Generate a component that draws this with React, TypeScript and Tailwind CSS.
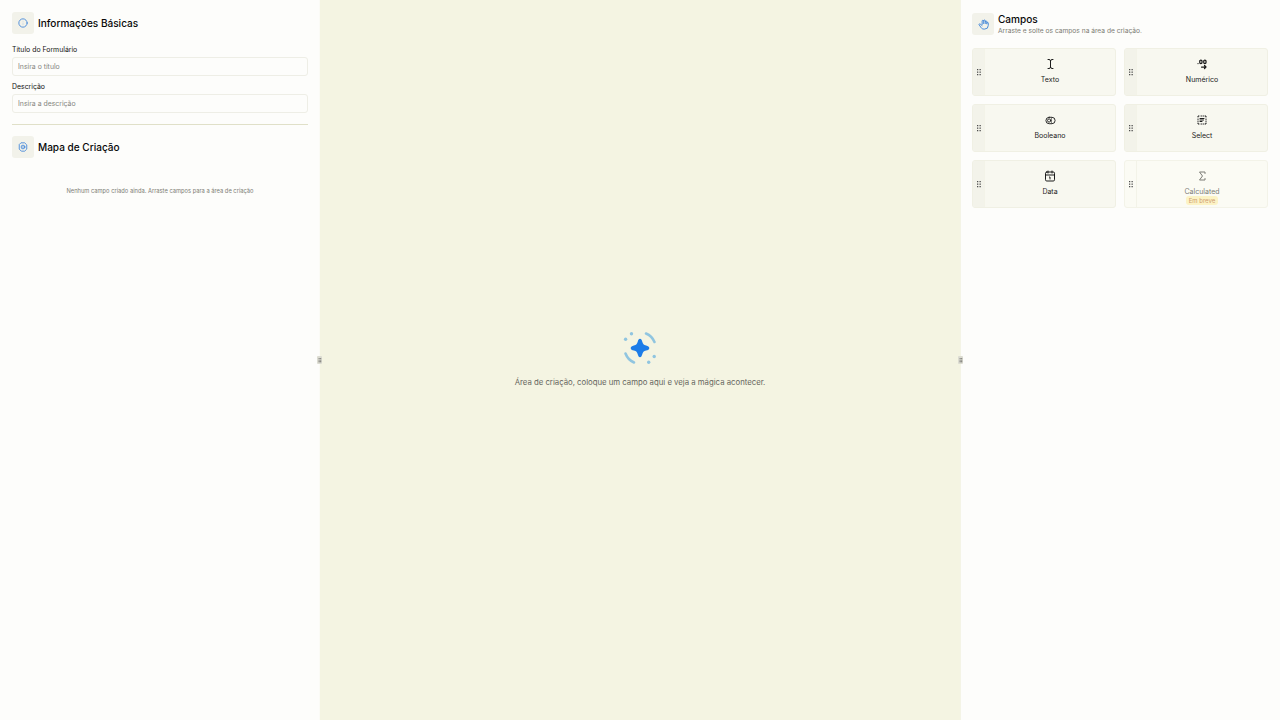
import type { ReactNode } from "react";

const stroke = {
  viewBox: "0 0 24 24",
  fill: "none",
  stroke: "currentColor",
  strokeWidth: 2,
  strokeLinecap: "round" as const,
  strokeLinejoin: "round" as const,
};

const InfoIcon = () => (
  <svg {...stroke} className="size-[10px]">
    <circle cx="12" cy="12" r="10" />
    <path d="M12 16v-4M12 8h.01" strokeWidth={1.3} opacity={0.35} />
  </svg>
);

const MapIcon = () => (
  <svg {...stroke} className="size-[10px]">
    <path d="M8 2h8l5 5v10l-5 5H8l-5-5V7z" />
    <circle cx="12" cy="12" r="4.500" />
    <path d="M11 12h2" />
  </svg>
);

const HandIcon = () => (
  <svg {...stroke} className="size-[11px]">
    <path d="M9 12V4.500a1.700 1.700 0 0 1 3.400 0V10M12.400 4a1.700 1.700 0 0 1 3.400 0v6M15.800 6a1.700 1.700 0 0 1 3.400 0v4.500M19.200 9a1.600 1.600 0 0 1 3.200 0v5a8 8 0 0 1-8 8H13c-3 0-5-1.200-6.400-3.400L2.400 12.500c-.700-1.200 1-2.700 2.300-1.600L9 14.500" />
  </svg>
);

const TextIcon = () => (
  <svg {...stroke} className="size-[12px]">
    <path d="M8 3h2q3 0 3 3v12q0 3-3 3H8M18 3h-2q-3 0-3 3M18 21h-2q-3 0-3-3" />
  </svg>
);

const DecimalIcon = () => (
  <svg {...stroke} strokeWidth={2.5} className="size-[12px]">
    <path d="M4 11h.01" />
    <rect x="7.500" y="4" width="4.500" height="7" rx="2.200" />
    <rect x="15.500" y="4" width="4.500" height="7" rx="2.200" />
    <path d="M11 18h9m-3-3 3 3-3 3" />
  </svg>
);

const ToggleIcon = () => (
  <svg {...stroke} className="size-[11px]">
    <rect x="2" y="5" width="20" height="14" rx="7" />
    <circle cx="9" cy="12" r="3.500" />
    <path d="M14 6v12" strokeWidth={1.200} />
  </svg>
);

const SelectIcon = () => (
  <svg {...stroke} className="size-[12px]">
    <path d="M4 6V4h2M18 4h2v2M20 18v2h-2M6 20H4v-2M10 4h1M14 4h1M10 20h1M14 20h1M4 10v1M4 14v1M20 10v1M20 14v1" />
    <path d="M8 9h8M8 12h7M8 15h4" />
  </svg>
);

const DateIcon = () => (
  <svg {...stroke} className="size-[12px]">
    <rect x="3" y="4" width="18" height="18" rx="2.500" />
    <path d="M8 2v4M16 2v4M3 10h18M11 14h1v4" />
  </svg>
);

const SigmaIcon = () => (
  <svg {...stroke} className="size-[12px]">
    <path d="M18 7V4H7l6 8-6 8h11v-3" />
  </svg>
);

const Grip = ({ className }: { className: string }) => (
  <svg viewBox="0 0 6 8" fill="currentColor" className={className}>
    {[1, 3.5].map((x) =>
      [1, 3.5, 6].map((y) => <rect key={`${x}-${y}`} x={x} y={y} width="1.300" height="1.300" rx="0.300" />),
    )}
  </svg>
);

const IconTile = ({ children }: { children: ReactNode }) => (
  <div className="flex size-[22px] shrink-0 items-center justify-center rounded-[3px] bg-[#f2f2ea] text-[#3b82d8]">
    {children}
  </div>
);

const Heading = ({ children }: { children: ReactNode }) => (
  <h2 className="whitespace-nowrap text-[10.050px] leading-[12px] font-medium text-[#080808]">{children}</h2>
);

const Field = ({ label, placeholder, className }: { label: string; placeholder: string; className: string }) => (
  <label className={`flex flex-col ${className}`}>
    <span className="text-[6.900px] leading-[10px] text-[#111]">{label}</span>
    <input
      placeholder={placeholder}
      className="h-[19px] w-full rounded-[3px] border border-[#eeeee6] bg-transparent px-[5px] text-[6.900px] outline-none placeholder:text-[#858580]"
    />
  </label>
);

const Card = ({ icon, label, soon }: { icon: ReactNode; label: string; soon?: boolean }) => (
  <div
    className={
      soon
        ? "flex h-12 overflow-hidden rounded-[3px] border border-[#f3f3e8] bg-[#fbfbf4] text-[#7c7c76]"
        : "flex h-12 overflow-hidden rounded-[3px] border border-[#f0f0e4] bg-[#f8f8f0] text-[#1c1c1c]"
    }
  >
    <div
      className={
        soon
          ? "flex w-3 items-center justify-center border-r border-[#f3f3e8]"
          : "flex w-3 items-center justify-center border-r border-[#f3f3e8] bg-[#f3f3ea]"
      }
    >
      <Grip className="h-[8px] w-[6px] text-[#444]" />
    </div>
    <div className="flex flex-1 flex-col items-center pt-[9px]">
      <div className="flex h-3 items-center">{icon}</div>
      <span className="mt-[5px] text-[7px] leading-[10px]">{label}</span>
      {soon && (
        <span className="-mt-px rounded-[3px] bg-[#fcf3c5] px-[3px] text-[6px] leading-[9px] text-[#cf9c70]">
          Em breve
        </span>
      )}
    </div>
  </div>
);

const Handle = ({ className }: { className: string }) => (
  <div className={`relative z-10 h-full w-px shrink-0 ${className}`}>
    <div className="absolute top-1/2 -left-[2px] flex h-[8px] w-[5px] -translate-y-1/2 items-center justify-center rounded-[1px] bg-[#dcdcd2]">
      <Grip className="h-[6px] w-[4px] text-[#333]" />
    </div>
  </div>
);

const Sparkle = () => (
  <svg viewBox="0 0 40 40" className="size-10" fill="none">
    <path
      d="M20 10.800c1.200 0 1.700.900 2.200 2.600.700 2.500 1.400 3.300 3.900 4 1.900.500 3.200 1.200 3.200 2.600s-1.300 2.100-3.200 2.600c-2.500.700-3.200 1.500-3.900 4-.500 1.700-1 2.600-2.200 2.600s-1.700-.900-2.200-2.600c-.700-2.500-1.400-3.300-3.900-4-1.900-.500-3.200-1.200-3.200-2.600s1.300-2.100 3.200-2.600c2.500-.700 3.200-1.500 3.900-4 .500-1.700 1-2.600 2.200-2.600Z"
      fill="#1c7ce8"
    />
    <g stroke="#90c5e0" strokeWidth="2.600" strokeLinecap="round">
      <path d="M26 5.500A16 16 0 0 1 34.500 14" />
      <path d="M5.500 25.500A16 16 0 0 0 14 34.500" />
    </g>
    <g fill="#90c5e0">
      <circle cx="11.500" cy="5.700" r="1.700" />
      <circle cx="5.600" cy="11.300" r="1.700" />
      <circle cx="34.200" cy="28.500" r="1.700" />
      <circle cx="28.700" cy="34.200" r="1.700" />
    </g>
  </svg>
);

export default function App() {
  return (
    <div className="flex h-screen w-screen overflow-hidden bg-[#fdfdfb] font-['Inter','Liberation_Sans',sans-serif]">
      <aside className="w-[319px] shrink-0 pt-3 pr-[11px] pl-3">
        <div className="flex items-center gap-1">
          <IconTile><InfoIcon /></IconTile>
          <Heading>Informações Básicas</Heading>
        </div>
        <Field label="Título do Formulário" placeholder="Insira o título" className="mt-[11px] gap-[2px]" />
        <Field label="Descrição" placeholder="Insira a descrição" className="mt-[6px] gap-[2px]" />
        <hr className="mt-[11px] border-[#e0e0c8]" />
        <div className="mt-[11px] flex items-center gap-1">
          <IconTile><MapIcon /></IconTile>
          <Heading>Mapa de Criação</Heading>
        </div>
        <p className="mt-7 text-center text-[5.750px] leading-[10px] text-[#7c7c74]">
          Nenhum campo criado ainda. Arraste campos para a área de criação
        </p>
      </aside>
      <Handle className="bg-[#fbfbf6]" />
      <main className="flex min-w-0 flex-1 flex-col items-center bg-[#f4f4e2] pt-[328px]">
        <Sparkle />
        <p className="mt-[8px] text-[7.780px] leading-[12px] text-[#666660]">
          Área de criação, coloque um campo aqui e veja a mágica acontecer.
        </p>
      </main>
      <Handle className="bg-[#f4f4e6]" />
      <aside className="w-[319px] shrink-0 pt-3 pr-3 pl-[11px]">
        <div className="flex h-[25px] items-start gap-1">
          <div className="pt-px"><IconTile><HandIcon /></IconTile></div>
          <div className="pt-px">
            <Heading>Campos</Heading>
            <p className="text-[6.650px] leading-[12px] text-[#7c7c74]">Arraste e solte os campos na área de criação.</p>
          </div>
        </div>
        <div className="mt-[11px] grid grid-cols-2 gap-2">
          <Card icon={<TextIcon />} label="Texto" />
          <Card icon={<DecimalIcon />} label="Numérico" />
          <Card icon={<ToggleIcon />} label="Booleano" />
          <Card icon={<SelectIcon />} label="Select" />
          <Card icon={<DateIcon />} label="Data" />
          <Card icon={<SigmaIcon />} label="Calculated" soon />
        </div>
      </aside>
    </div>
  );
}
